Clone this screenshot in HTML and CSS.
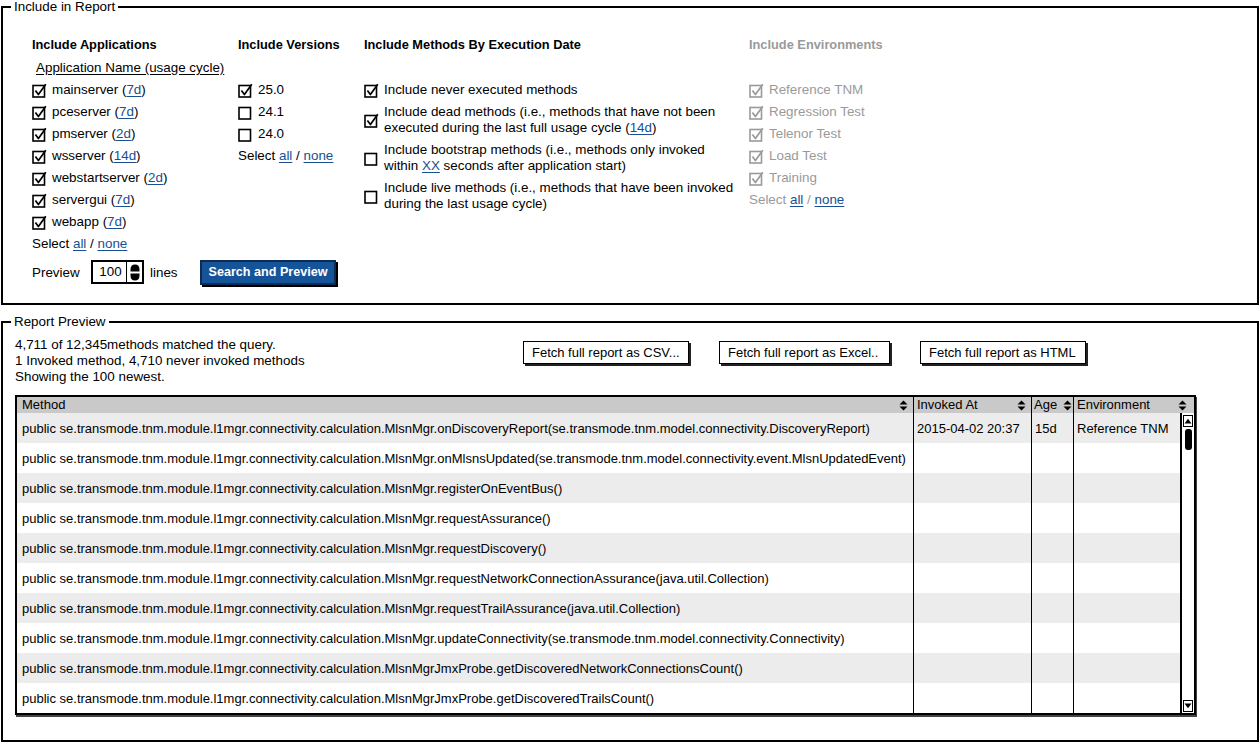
FILE: index.html
```html
<!DOCTYPE html>
<html lang="en">
<head>
<meta charset="utf-8">
<title>Include in Report</title>
<link rel="stylesheet" href="styles.css">
</head>
<body>
<svg class="defs" width="0" height="0" aria-hidden="true">
  <defs>
    <symbol id="chk" viewBox="0 0 15 16">
      <rect x="1" y="3.5" width="11.5" height="11.5" fill="none" stroke="currentColor" stroke-width="1.6"/>
      <path d="M3.4 8.6 L6.4 12.6 L13.8 2.2" fill="none" stroke="currentColor" stroke-width="1.7" stroke-linejoin="round"/>
    </symbol>
    <symbol id="unchk" viewBox="0 0 15 16">
      <rect x="1" y="3.5" width="11.5" height="11.5" fill="none" stroke="currentColor" stroke-width="1.6"/>
    </symbol>
    <symbol id="sort" viewBox="0 0 9 11">
      <path d="M0.5 4.5 L4.5 0.5 L8.5 4.5 Z M0.5 6.5 L4.5 10.5 L8.5 6.5 Z" fill="#000"/>
    </symbol>
  </defs>
</svg>

<fieldset class="group include">
  <legend>Include in Report</legend>
  <div class="include-body">
    <div class="col col-apps">
      <div class="col-head">Include Applications</div>
      <div class="subhead">Application Name (usage cycle)</div>
      <div class="list">
        <div class="item"><svg class="cb"><use href="#chk"/></svg><span>mainserver (<a class="lnk">7d</a>)</span></div>
        <div class="item"><svg class="cb"><use href="#chk"/></svg><span>pceserver (<a class="lnk">7d</a>)</span></div>
        <div class="item"><svg class="cb"><use href="#chk"/></svg><span>pmserver (<a class="lnk">2d</a>)</span></div>
        <div class="item"><svg class="cb"><use href="#chk"/></svg><span>wsserver (<a class="lnk">14d</a>)</span></div>
        <div class="item"><svg class="cb"><use href="#chk"/></svg><span>webstartserver (<a class="lnk">2d</a>)</span></div>
        <div class="item"><svg class="cb"><use href="#chk"/></svg><span>servergui (<a class="lnk">7d</a>)</span></div>
        <div class="item"><svg class="cb"><use href="#chk"/></svg><span>webapp (<a class="lnk">7d</a>)</span></div>
      </div>
      <div class="select">Select <a class="lnk">all</a> / <a class="lnk">none</a></div>
      <div class="preview-row">
        <span class="preview-label">Preview</span>
        <div class="spinner">
          <span class="spin-value">100</span>
          <span class="spin-arrows">
            <svg width="10" height="17" viewBox="0 0 10 17"><path d="M0.5 7.5 L0.5 5.5 Q0.5 0.5 5 0.5 Q9.5 0.5 9.5 5.5 L9.5 7.5 Z M0.5 9.5 L9.5 9.5 L9.5 11.5 Q9.5 16.5 5 16.5 Q0.5 16.5 0.5 11.5 Z" fill="#000"/></svg>
          </span>
        </div>
        <span class="lines">lines</span>
        <button class="primary" type="button">Search and Preview</button>
      </div>
    </div>

    <div class="col col-versions">
      <div class="col-head">Include Versions</div>
      <div class="list list-offset">
        <div class="item"><svg class="cb"><use href="#chk"/></svg><span>25.0</span></div>
        <div class="item"><svg class="cb"><use href="#unchk"/></svg><span>24.1</span></div>
        <div class="item"><svg class="cb"><use href="#unchk"/></svg><span>24.0</span></div>
      </div>
      <div class="select">Select <a class="lnk">all</a> / <a class="lnk">none</a></div>
    </div>

    <div class="col col-methods">
      <div class="col-head">Include Methods By Execution Date</div>
      <div class="list list-offset">
        <div class="item"><svg class="cb"><use href="#chk"/></svg><span>Include never executed methods</span></div>
        <div class="item"><svg class="cb"><use href="#chk"/></svg><span>Include dead methods (i.e., methods that have not been<br>executed during the last full usage cycle (<a class="lnk">14d</a>)</span></div>
        <div class="item"><svg class="cb"><use href="#unchk"/></svg><span>Include bootstrap methods (i.e., methods only invoked<br>within <a class="lnk">XX</a> seconds after application start)</span></div>
        <div class="item"><svg class="cb"><use href="#unchk"/></svg><span>Include live methods (i.e., methods that have been invoked<br>during the last usage cycle)</span></div>
      </div>
    </div>

    <div class="col col-env">
      <div class="col-head">Include Environments</div>
      <div class="list list-offset">
        <div class="item"><svg class="cb"><use href="#chk"/></svg><span>Reference TNM</span></div>
        <div class="item"><svg class="cb"><use href="#chk"/></svg><span>Regression Test</span></div>
        <div class="item"><svg class="cb"><use href="#chk"/></svg><span>Telenor Test</span></div>
        <div class="item"><svg class="cb"><use href="#chk"/></svg><span>Load Test</span></div>
        <div class="item"><svg class="cb"><use href="#chk"/></svg><span>Training</span></div>
      </div>
      <div class="select select-env">Select <a class="lnk">all</a> / <a class="lnk">none</a></div>
    </div>
  </div>
</fieldset>

<fieldset class="group report">
  <legend>Report Preview</legend>
  <div class="report-body">
    <div class="summary">
      <div class="summary-text">
        <div>4,711 of 12,345methods matched the query.</div>
        <div>1 Invoked method, 4,710 never invoked methods</div>
        <div>Showing the 100 newest.</div>
      </div>
      <div class="fetch-buttons">
        <button class="fetch fetch-csv" type="button">Fetch full report as CSV...</button>
        <button class="fetch fetch-excel" type="button">Fetch full report as Excel..</button>
        <button class="fetch fetch-html" type="button">Fetch full report as HTML</button>
      </div>
    </div>

    <div class="table">
      <div class="thead">
        <div class="th th-method"><span>Method</span><svg class="sort"><use href="#sort"/></svg></div>
        <div class="th"><span>Invoked At</span><svg class="sort"><use href="#sort"/></svg></div>
        <div class="th th-age"><span>Age</span><svg class="sort"><use href="#sort"/></svg></div>
        <div class="th th-env"><span>Environment</span><svg class="sort"><use href="#sort"/></svg></div>
      </div>
      <div class="tbody">
        <div class="rows">
          <div class="row"><div class="td td-method">public se.transmode.tnm.module.l1mgr.connectivity.calculation.MlsnMgr.onDiscoveryReport(se.transmode.tnm.model.connectivity.DiscoveryReport)</div><div class="td">2015-04-02 20:37</div><div class="td">15d</div><div class="td td-env">Reference TNM</div></div>
          <div class="row"><div class="td td-method">public se.transmode.tnm.module.l1mgr.connectivity.calculation.MlsnMgr.onMlsnsUpdated(se.transmode.tnm.model.connectivity.event.MlsnUpdatedEvent)</div><div class="td"></div><div class="td"></div><div class="td td-env"></div></div>
          <div class="row"><div class="td td-method">public se.transmode.tnm.module.l1mgr.connectivity.calculation.MlsnMgr.registerOnEventBus()</div><div class="td"></div><div class="td"></div><div class="td td-env"></div></div>
          <div class="row"><div class="td td-method">public se.transmode.tnm.module.l1mgr.connectivity.calculation.MlsnMgr.requestAssurance()</div><div class="td"></div><div class="td"></div><div class="td td-env"></div></div>
          <div class="row"><div class="td td-method">public se.transmode.tnm.module.l1mgr.connectivity.calculation.MlsnMgr.requestDiscovery()</div><div class="td"></div><div class="td"></div><div class="td td-env"></div></div>
          <div class="row"><div class="td td-method">public se.transmode.tnm.module.l1mgr.connectivity.calculation.MlsnMgr.requestNetworkConnectionAssurance(java.util.Collection)</div><div class="td"></div><div class="td"></div><div class="td td-env"></div></div>
          <div class="row"><div class="td td-method">public se.transmode.tnm.module.l1mgr.connectivity.calculation.MlsnMgr.requestTrailAssurance(java.util.Collection)</div><div class="td"></div><div class="td"></div><div class="td td-env"></div></div>
          <div class="row"><div class="td td-method">public se.transmode.tnm.module.l1mgr.connectivity.calculation.MlsnMgr.updateConnectivity(se.transmode.tnm.model.connectivity.Connectivity)</div><div class="td"></div><div class="td"></div><div class="td td-env"></div></div>
          <div class="row"><div class="td td-method">public se.transmode.tnm.module.l1mgr.connectivity.calculation.MlsnMgrJmxProbe.getDiscoveredNetworkConnectionsCount()</div><div class="td"></div><div class="td"></div><div class="td td-env"></div></div>
          <div class="row"><div class="td td-method">public se.transmode.tnm.module.l1mgr.connectivity.calculation.MlsnMgrJmxProbe.getDiscoveredTrailsCount()</div><div class="td"></div><div class="td"></div><div class="td td-env"></div></div>
        </div>
        <div class="scrollbar">
          <span class="sb-btn"><svg width="8" height="6" viewBox="0 0 8 6"><path d="M0.5 5.5 L4 0.8 L7.5 5.5 Z" fill="#000"/></svg></span>
          <span class="sb-thumb"></span>
          <span class="sb-space"></span>
          <span class="sb-btn"><svg width="8" height="6" viewBox="0 0 8 6"><path d="M0.5 0.5 L4 5.2 L7.5 0.5 Z" fill="#000"/></svg></span>
        </div>
      </div>
    </div>
  </div>
</fieldset>
</body>
</html>
```

FILE: styles.css
```css
* { box-sizing: border-box; }
html, body { margin: 0; padding: 0; }
body {
  width: 1260px;
  height: 744px;
  overflow: hidden;
  background: #fff;
  color: #000;
  font-family: "Liberation Sans", Arial, sans-serif;
  font-size: 13.4px;
}
.defs { position: absolute; width: 0; height: 0; overflow: hidden; }

.group {
  margin: 0 1px;
  padding: 0;
  border: 2px solid #000;
  min-width: 0;
}
.group > legend {
  margin-left: 8px;
  padding: 0 3px;
  line-height: 14px;
  font-size: 13.4px;
}
.include { height: 305px; }
.include-body {
  display: flex;
  padding: 23px 0 0 29px;
}
.col { display: flex; flex-direction: column; flex: none; }
.col-apps { width: 206px; }
.col-versions { width: 126px; }
.col-methods { width: 385px; }
.col-env { width: 300px; color: #9a9a9a; }

.col-head {
  font-weight: bold;
  font-size: 12.8px;
  line-height: 16px;
}
.subhead {
  margin: 7px 0 3px 4px;
  line-height: 16px;
  text-decoration: underline;
  text-underline-offset: 2px;
}
.list-offset { margin-top: 26px; }
.item {
  display: flex;
  align-items: center;
  gap: 5px;
  padding: 3px 0;
  line-height: 16px;
  white-space: nowrap;
}
.cb { width: 15px; height: 16px; flex: none; color: #000; }
.col-env .cb { color: #9a9a9a; }
.select { padding: 3px 0 2px; line-height: 16px; }
.lnk {
  color: #174f92;
  text-decoration: underline;
  text-underline-offset: 2px;
}

.preview-row {
  display: flex;
  align-items: center;
  margin-top: 5px;
  height: 26px;
  width: max-content;
}
.preview-row > * { flex: none; }
.preview-label { width: 59px; }
.spinner {
  display: flex;
  width: 53px;
  height: 24px;
  border: 2px solid #000;
  background: #fff;
}
.spin-value {
  flex: 1;
  text-align: center;
  line-height: 20px;
  padding-left: 2px;
}
.spin-arrows {
  width: 16px;
  border-left: 1px solid #000;
  display: flex;
  align-items: center;
  justify-content: center;
}
.lines { width: 56px; padding-left: 6px; }
.primary {
  width: 136px;
  height: 25px;
  margin: 0;
  padding: 0;
  border: 2px solid #0b2d55;
  box-shadow: 2px 2px 0 #000;
  background: #16549a;
  color: #fff;
  font-family: inherit;
  font-weight: bold;
  font-size: 12.6px;
  white-space: nowrap;
}

.report { margin-top: 10px; height: 427px; }
.report-body { padding: 8px 0 0 12px; }
.summary { display: flex; }
.summary-text { width: 508px; line-height: 16px; }
.fetch-buttons { display: flex; gap: 30px; margin-top: 4px; align-items: flex-start; }
.fetch {
  height: 23px;
  margin: 0;
  padding: 0 0 0 8px;
  border: 1.5px solid #000;
  box-shadow: 2px 2px 0 #222;
  background: #fff;
  color: #000;
  font-family: inherit;
  font-size: 13px;
  text-align: left;
  white-space: nowrap;
}
.fetch-csv { width: 166px; }
.fetch-excel { width: 171px; }
.fetch-html { width: 166px; }

.table {
  margin-top: 10px;
  width: 1181px;
  border: 2px solid #000;
  box-shadow: 1px 2px 0 #444;
  font-size: 13px;
}
.thead {
  display: grid;
  grid-template-columns: 897px 118px 42px 120px;
  height: 16px;
  background: #c9c9c9;
}
.th {
  display: flex;
  align-items: center;
  justify-content: space-between;
  padding: 0 5px 0 3px;
  border-right: 1px solid #000;
  line-height: 16px;
  white-space: nowrap;
}
.th-method { padding-left: 5px; }
.th-age { padding: 0 1px 0 2px; }
.th-env { border-right: none; padding-right: 7px; }
.sort { width: 9px; height: 11px; flex: none; }

.tbody { display: flex; }
.rows { flex: 1; }
.row {
  display: grid;
  grid-template-columns: 897px 118px 42px 106px;
  height: 30px;
}
.row:nth-child(odd) { background: #ececec; }
.td {
  display: flex;
  align-items: center;
  padding-left: 3px;
  border-right: 1px solid #000;
  white-space: nowrap;
  overflow: hidden;
}
.td-method { padding-left: 5px; }
.td-env { border-right: none; }
.scrollbar {
  width: 14px;
  border-left: 2px solid #000;
  display: flex;
  flex-direction: column;
  align-items: center;
  padding: 2px 0 1px;
  background: #fff;
}
.sb-btn {
  width: 10px;
  height: 12px;
  border: 1.5px solid #000;
  display: flex;
  align-items: center;
  justify-content: center;
}
.sb-thumb {
  width: 7px;
  height: 21px;
  margin-top: 2px;
  border-radius: 3px;
  background: #000;
}
.sb-space { flex: 1; }
```
